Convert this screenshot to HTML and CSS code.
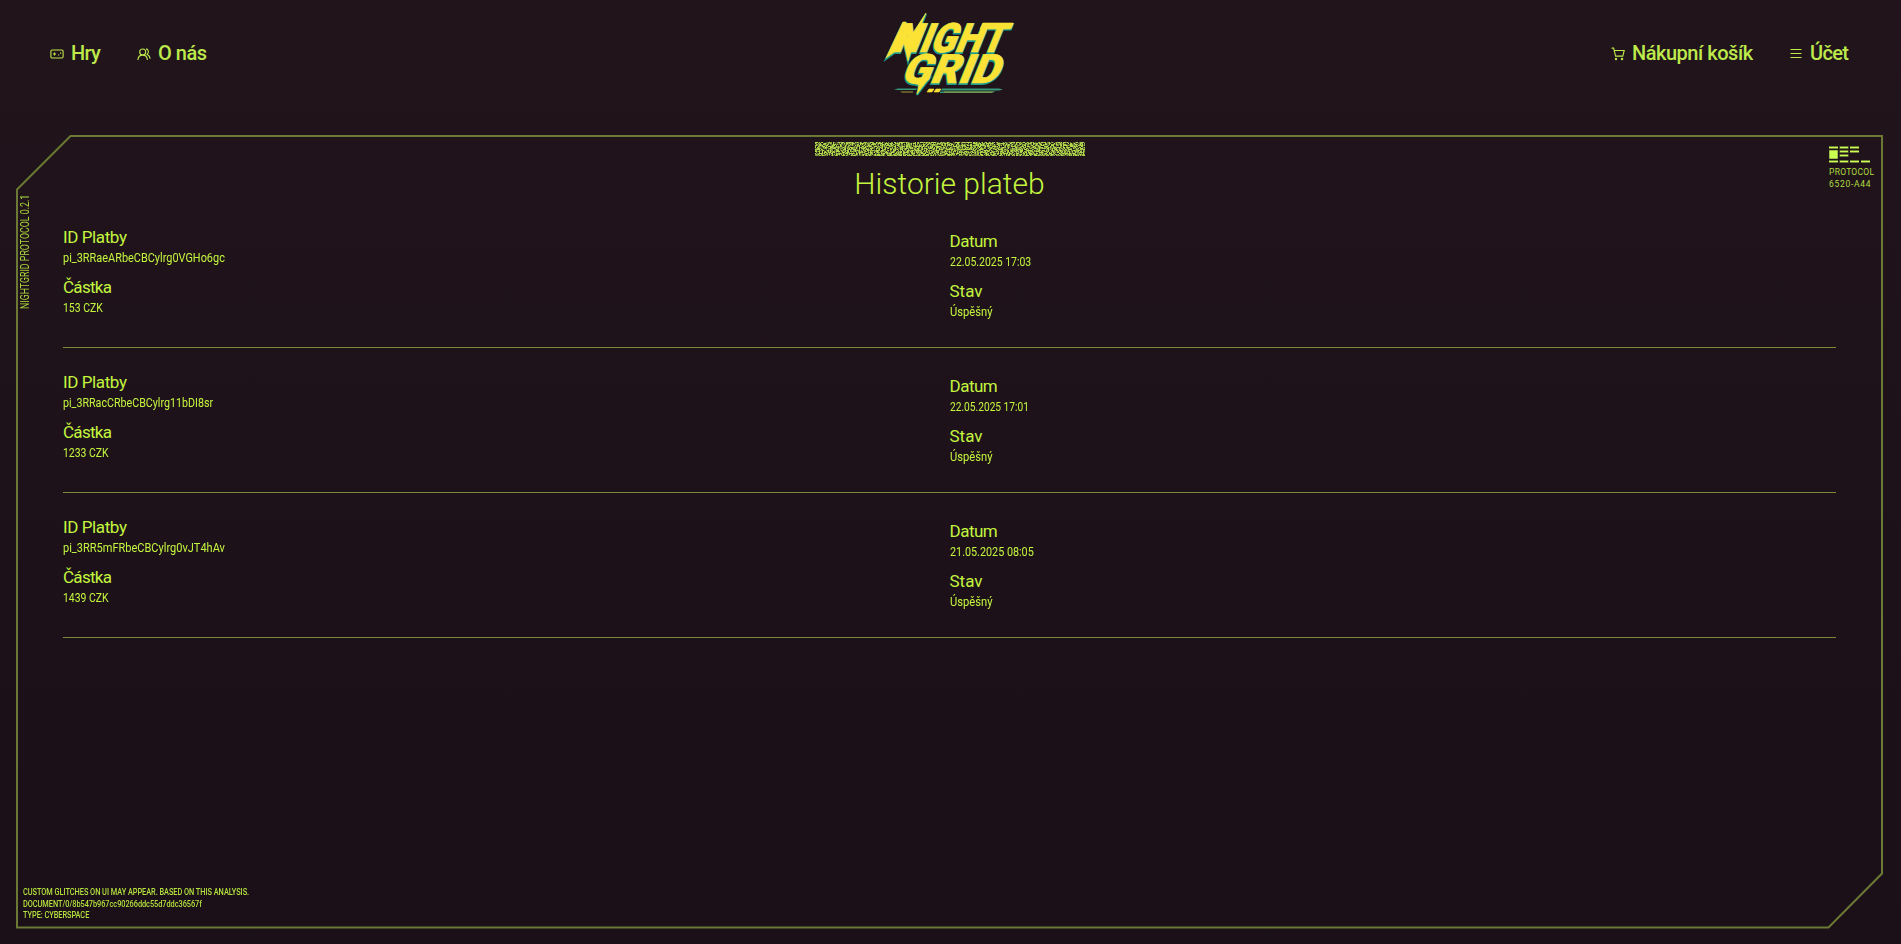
FILE: index.html
```html
<!DOCTYPE html>
<html lang="cs">
<head>
<meta charset="utf-8">
<title>Night Grid – Historie plateb</title>
<link rel="stylesheet" href="styles.css">
</head>
<body>
<header class="header">
  <nav class="nav">
    <a class="nav-item nav-hry">
      <svg class="icon" viewBox="0 0 14 14"><rect x=".9" y="3" width="12.2" height="8" rx="1.2"/><path d="M3 7h3M4.500 5.500v3"/><path d="M8 8h1.200M10 6.200h1.200" class="dot"/></svg>
      <span>Hry</span></a>
    <a class="nav-item nav-about">
      <svg class="icon" viewBox="0 0 14 14"><circle cx="5.700" cy="5" r="3"/><path d="M.9 13c.2-3 2-4.900 4.800-4.900s4.500 1.900 4.700 4.900M9 1.900c2.500.2 3.300 3.800 1.100 5.300 1.700.9 2.800 2.300 3 4.600"/></svg>
      <span>O nás</span></a>
  </nav>
  <a class="logo" aria-label="Night Grid">
    <svg class="logo-art" viewBox="880 5 140 95">
      <g class="logo-shade">
        <text transform="translate(892 53) skewX(-22)" textLength="110" lengthAdjust="spacingAndGlyphs">NIGHT</text>
        <text transform="translate(900 84) skewX(-22)" textLength="97" lengthAdjust="spacingAndGlyphs">GRID</text>
        <path d="M903 23l-17 36 14-10 6-26zM926 14l-13 20-10 6 5 22 6-19zM930 78l-13 17 2-9-8-3z"/>
      </g>
      <g class="logo-face">
        <text transform="translate(892 52) skewX(-22)" textLength="110" lengthAdjust="spacingAndGlyphs">NIGHT</text>
        <text transform="translate(900 83) skewX(-22)" textLength="97" lengthAdjust="spacingAndGlyphs">GRID</text>
        <path d="M903 22l-17 36 14-10 6-26zM926 13l-13 20-10 6 5 22 6-19zM930 77l-13 17 2-9-8-3z"/>
        <path d="M983 23h30l-3 6h-30z"/>
        <path d="M929 89h5l-2 3h-5zM936 89h5l-2 3h-5z"/>
      </g>
      <path class="logo-teal" d="M894 89.500l4-1h19l-1 1.500h-18zM942 88.500h57l4 1-4 1h-58zM940 91.500h56l-5 1.500h-51z"/>
      <path class="logo-gold" d="M900 91.500h13v1h-11zM944 91.500h50l-2 1h-48z"/>
    </svg>
  </a>
  <nav class="nav">
    <a class="nav-item nav-cart">
      <svg class="icon" viewBox="0 0 14 14"><path d="M.6 1.100h2l2 8h7.200l1.400-5.600H3.300"/><circle cx="5" cy="12" r=".7"/><circle cx="11" cy="12" r=".7"/></svg>
      <span>Nákupní košík</span></a>
    <a class="nav-item nav-account">
      <svg class="icon" viewBox="0 0 14 14"><path d="M1.500 2.500h11M1.500 6.500h11M1.500 10.500h11"/></svg>
      <span>Účet</span></a>
  </nav>
</header>

<main class="panel">
  <svg class="frame" viewBox="0 0 1867 794"><path d="M1 54.500L54.500 1H1866V738.500L1812.500 792.500H1Z"/></svg>
  <svg class="noise" viewBox="0 0 270 14">
    <filter id="grain" x="0" y="0" width="100%" height="100%" color-interpolation-filters="sRGB">
      <feTurbulence type="fractalNoise" baseFrequency=".7" numOctaves="3" seed="8"/>
      <feColorMatrix values="0 0 0 0 .7  0 0 0 0 .86  0 0 0 0 .3  4 0 0 0 -1.3"/>
    </filter>
    <rect width="270" height="14" filter="url(#grain)"/>
  </svg>
  <h1 class="title">Historie plateb</h1>

  <section class="list">
    <article class="row">
      <dl class="col"><dt class="l-id">ID Platby</dt><dd class="v-id-a">pi_3RRaeARbeCBCylrg0VGHo6gc</dd><dt class="l-sum">Částka</dt><dd class="v-sum">153 CZK</dd></dl>
      <dl class="col col-right"><dt class="l-date">Datum</dt><dd class="v-date">22.05.2025 17:03</dd><dt>Stav</dt><dd class="v-state">Úspěšný</dd></dl>
    </article>
    <article class="row">
      <dl class="col"><dt class="l-id">ID Platby</dt><dd class="v-id-b">pi_3RRacCRbeCBCylrg11bDI8sr</dd><dt class="l-sum">Částka</dt><dd class="v-sum">1233 CZK</dd></dl>
      <dl class="col col-right"><dt class="l-date">Datum</dt><dd class="v-date-b">22.05.2025 17:01</dd><dt>Stav</dt><dd class="v-state">Úspěšný</dd></dl>
    </article>
    <article class="row">
      <dl class="col"><dt class="l-id">ID Platby</dt><dd class="v-id-c">pi_3RR5mFRbeCBCylrg0vJT4hAv</dd><dt class="l-sum">Částka</dt><dd class="v-sum">1439 CZK</dd></dl>
      <dl class="col col-right"><dt class="l-date">Datum</dt><dd class="v-date-c">21.05.2025 08:05</dd><dt>Stav</dt><dd class="v-state">Úspěšný</dd></dl>
    </article>
  </section>

  <div class="side-label">NIGHTGRID PROTOCOL 0.2.1</div>
  <div class="badge">
    <svg class="badge-mark" viewBox="0 0 42 18">
      <path class="dim" d="M0 0h9v3H0zM10.500 0h9v3h-9zM21 0h9v3h-9zM0 4h9v9H0zM10.500 4h9v3h-9zM21 4h9v3h-9zM10.500 8h9v3h-9zM0 14h9v3H0zM10.500 14h9v3h-9zM21 14h9v3h-9zM32 14h9v3h-9z"/>
      <path class="lit" d="M0 1h9v1H0zM11 1h8v1h-8zM21 1h9v1h-9zM.5 4.500h8v8h-8zM11 5h8v1h-8zM21 5h9v1h-9zM11 9h8v1h-8zM0 15h9v1H0zM11 15h8v1h-8zM21 15h9v1h-9zM32 15h9v1h-9z"/>
    </svg>
    <div class="badge-name">PROTOCOL</div>
    <div class="badge-code">6520-A44</div>
  </div>
  <footer class="notes">
    <div>CUSTOM GLITCHES ON UI MAY APPEAR. BASED ON THIS ANALYSIS.</div>
    <div>DOCUMENT/0/8b547b967cc90266ddc55d7ddc36567f</div>
    <div>TYPE: CYBERSPACE</div>
  </footer>
</main>
</body>
</html>
```
FILE: styles.css
```css
* { box-sizing: border-box; }
body {
  margin: 0;
  width: 1901px;
  height: 944px;
  overflow: hidden;
  padding: 0 18px 0 16px;
  background: linear-gradient(#21141b, #1b0f18);
  color: #c3f53f;
  font-family: Roboto, sans-serif;
}
.header {
  display: flex;
  justify-content: space-between;
  height: 110px;
  padding: 0 34px;
  color: #bde94b;
  position: relative;
}
.nav { display: flex; gap: 36px; height: 106px; align-items: center; }
.nav-item { display: flex; align-items: center; gap: 8px; font-size: 20px; line-height: 24px; font-weight: 500; white-space: nowrap; }
.icon { width: 14px; height: 14px; margin-top: 2px; fill: none; stroke: currentColor; stroke-width: 1.1; }
.dot { stroke-width: 1.2; }
.nav-item span { position: relative; left: -1px; }
.nav-hry span { letter-spacing: -.7px; width: 29px; }
.nav-about span { letter-spacing: -.5px; }
.nav-cart span { letter-spacing: -.48px; width: 120px; }
.nav-account span { letter-spacing: -.7px; width: 38px; }
.logo { position: absolute; left: 864px; top: 5px; }
.logo-art { display: block; width: 140px; height: 95px; overflow: visible; }
.logo-art text { font: 900 40.500px Roboto, sans-serif; }
.logo-face { fill: #fbe234; stroke: #fbe234; stroke-width: .6; }
.logo-shade { fill: #1d9c8c; stroke: #1d9c8c; stroke-width: 2; }
.logo-teal { fill: #35997b; }
.logo-gold { fill: #9f9d38; }

.panel {
  position: relative;
  display: flex;
  flex-direction: column;
  align-items: center;
  width: 1867px;
  height: 794px;
  margin-top: 25px;
  padding: 7px 47px 0;
}
.frame { position: absolute; left: 0; top: 0; width: 1867px; height: 794px; fill: none; stroke: #6c7934; stroke-width: 2; }
.noise { width: 270px; height: 14px; }
.title { margin: 8px 0 0; height: 39px; font-size: 30px; line-height: 40px; font-weight: 300; letter-spacing: 0; }
.list { width: 1773px; }
.row { display: grid; grid-template-columns: 1fr 1fr; height: 145px; border-bottom: 1px solid #7a8a38; }
.col { margin: 0; padding-top: 23.5px; }
.col-right { padding-top: 27.5px; }
dt { font-size: 17px; line-height: 20px; }
dd { margin: 0 0 9px; width: max-content; font-size: 13px; line-height: 21px; transform-origin: 0 50%; }
.l-id { letter-spacing: -.4px; }
.l-sum { letter-spacing: -.7px; }
.l-date { letter-spacing: -.5px; }
.v-id-a { transform: scaleX(.84); }
.v-id-b { transform: scaleX(.822); }
.v-id-c { transform: scaleX(.847); }
.v-sum { transform: scaleX(.803); }
.v-date { transform: scaleX(.805); }
.v-date-b { transform: scaleX(.782); }
.v-date-c { transform: scaleX(.83); }
.v-state { transform: scaleX(.86); }

.side-label {
  position: absolute;
  left: 2px;
  top: 60px;
  writing-mode: vertical-rl;
  transform: rotate(180deg) scaleY(.735);
  transform-origin: 50% 0;
  margin-top: 114px;
  font-size: 12px;
  line-height: 14px;
  color: #a9d53c;
  white-space: nowrap;
}
.badge { position: absolute; left: 1813px; top: 11px; font-size: 8.5px; line-height: 12px; white-space: nowrap; color: #b1de40; }
.badge-mark { display: block; width: 42px; height: 18px; margin-bottom: 2px; }
.dim { fill: #6c7c35; }
.lit { fill: #cbff52; }
.badge-name { letter-spacing: .27px; }
.badge-code { letter-spacing: .7px; }
.notes { position: absolute; left: 7px; top: 752px; font-size: 8.5px; line-height: 11.5px; white-space: nowrap; transform: scaleX(.868); transform-origin: 0 0; color: #b4e23e; font-weight: 500; letter-spacing: -.05px; }
```
